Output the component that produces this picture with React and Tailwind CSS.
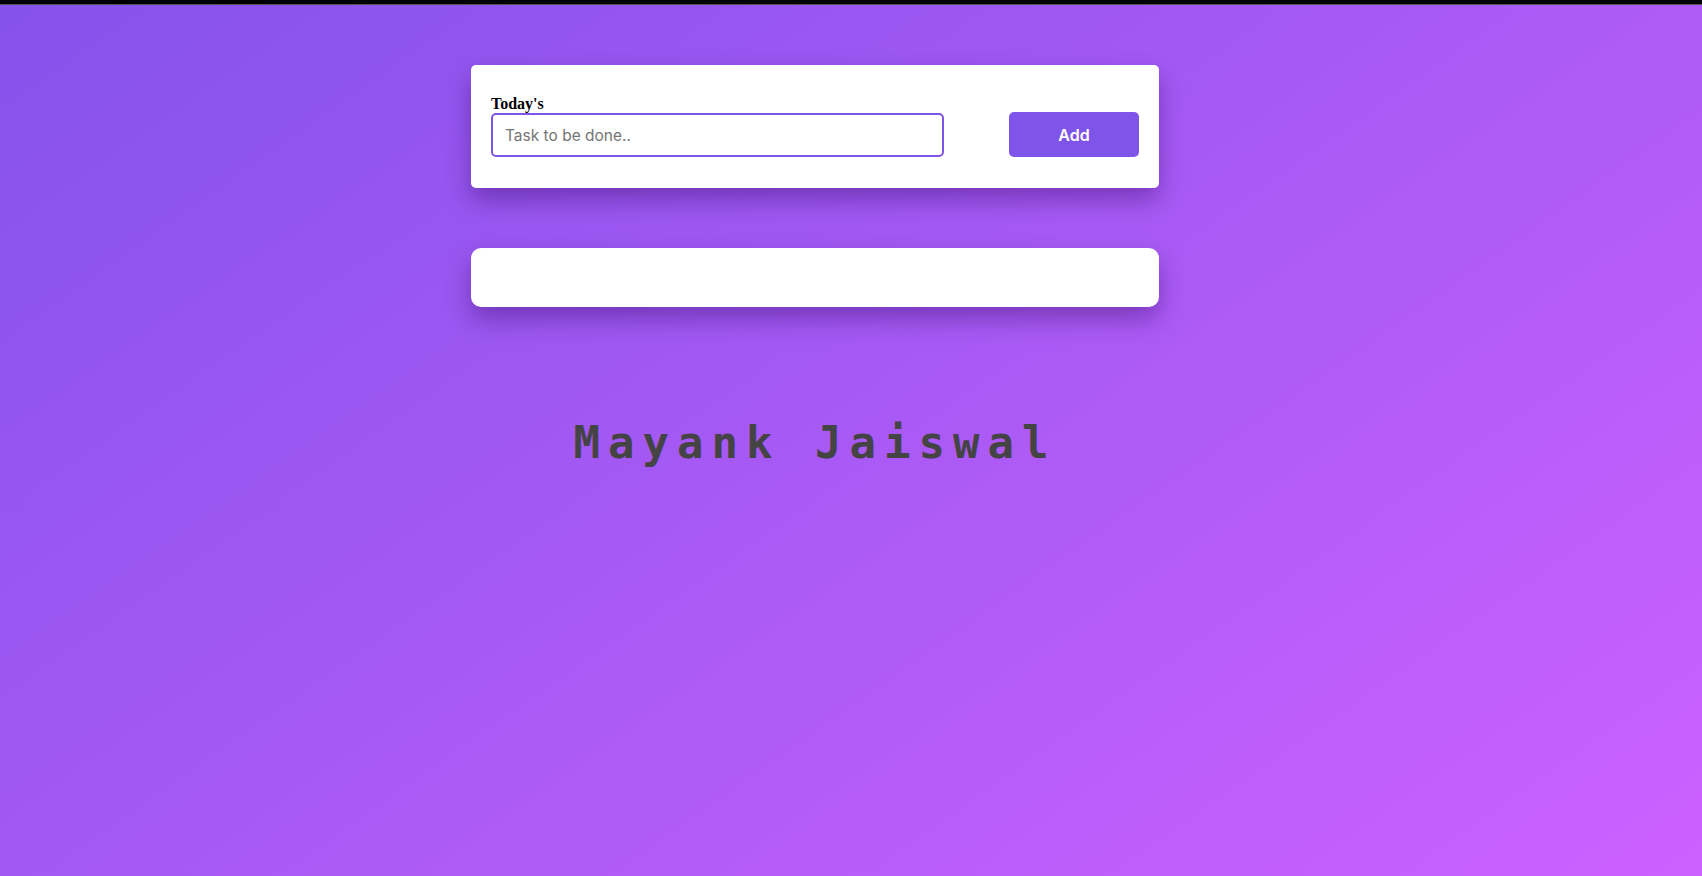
import React, { useState } from "react";

const App = () => {
  const [task, setTask] = useState("");

  return (
    <div className="min-h-[876px] w-full bg-[linear-gradient(145deg,#8552eb,#cc61ff)]">
      <div className="h-[5px] bg-black border-b border-[#555]" />

      <div className="ml-[471px] w-[688px] pt-[60px]">
        {/* Input card */}
        <div className="bg-white rounded-[5px] shadow-[0_12px_24px_rgba(40,0,80,0.36)] px-5 pt-[30px] pb-[31px] flex items-end justify-between">
          <div className="w-[453px]">
            <label className="block font-['Liberation_Serif',serif] font-bold text-[16px] leading-[18px] text-black">
              Today's
            </label>
            <input
              value={task}
              onChange={(e) => setTask(e.target.value)}
              placeholder="Task to be done.."
              className="w-full h-[44px] border-2 border-[#7e55e8] rounded-[5px] px-3 font-['Inter',sans-serif] text-[15.5px] text-[#333] placeholder:text-[#757575] outline-none"
            />
          </div>
          <button className="w-[130px] h-[45px] bg-[#7f55e9] rounded-[5px] text-white font-['Inter',sans-serif] font-semibold text-[16px]">
            Add
          </button>
        </div>

        {/* Task list */}
        <div className="mt-[60px] h-[59px] bg-white rounded-[10px] shadow-[0_12px_24px_rgba(40,0,80,0.36)]" />

        <h1 className="mt-[110px] text-center font-['DejaVu_Sans_Mono',monospace] font-bold text-[44px] leading-[52px] tracking-[8px] text-[#444]">
          Mayank Jaiswal
        </h1>
      </div>
    </div>
  );
};

export default App;
